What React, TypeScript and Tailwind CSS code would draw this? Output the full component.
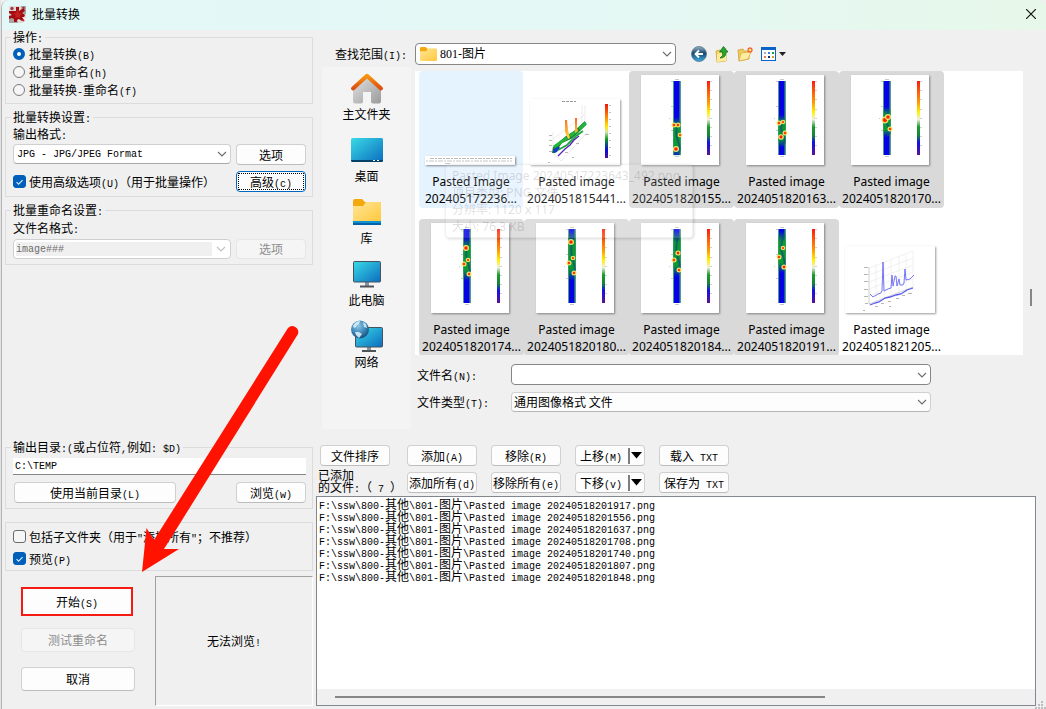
import React, { useId, useState } from "react";

const ZH = "font-['Liberation_Mono','Noto_Sans_CJK_SC',monospace]";

/** Bitmap-style interface text: half-width Latin runs beside full-width Chinese. */
function T({ children, tight = false }: { children: string; tight?: boolean }) {
  const runs = children.split(/([\x20-\x7e]+)/).filter(Boolean);
  return (
    <span className={`block whitespace-pre text-xs font-['Noto_Sans_CJK_SC',sans-serif] ${tight ? "leading-3" : "leading-[14px]"}`}>
      {runs.map((run, i) =>
        /^[\x20-\x7e]/.test(run) ? (
          <span key={i} className="font-['Liberation_Mono',monospace] text-[10px] leading-[0px]">
            {run}
          </span>
        ) : (
          run
        ),
      )}
    </span>
  );
}

function Chevron({ muted = false }: { muted?: boolean }) {
  return (
    <svg
      className={`pointer-events-none absolute right-1 top-1/2 -translate-y-1/2 ${muted ? "text-[#c0c0c0]" : "text-[#6c6c6c]"}`}
      width="10"
      height="6"
      viewBox="0 0 10 6"
      fill="none"
      stroke="currentColor"
      strokeWidth="1.1"
      aria-hidden="true"
    >
      <path d="M1 1l4 4 4-4" />
    </svg>
  );
}

function Btn({ label, className = "", disabled = false }: { label: string; className?: string; disabled?: boolean }) {
  return (
    <button
      type="button"
      disabled={disabled}
      className={`flex items-center justify-center rounded border ${
        disabled ? "border-[#e6e6e6] bg-[#f5f5f5] text-[#8d8d8d]" : "border-[#d0d0d0] border-b-[#bcbcbc] bg-[#fdfdfd] text-black"
      } ${className}`}
    >
      <T>{label}</T>
    </button>
  );
}

function Group({ title, className = "", children }: { title: string; className?: string; children: React.ReactNode }) {
  return (
    <fieldset className={`min-w-0 border border-[#dcdcdc] pl-[7px] pr-1.5 ${className}`}>
      <legend className="-ml-0.5 flex h-3.5 items-center px-0.5">
        <T>{title}</T>
      </legend>
      {children}
    </fieldset>
  );
}

function Radio({ label, checked, onChange }: { label: string; checked: boolean; onChange: () => void }) {
  return (
    <label className="flex h-[18px] items-center gap-1">
      <input
        type="radio"
        name="operation"
        checked={checked}
        onChange={onChange}
        className="h-3 w-3 appearance-none rounded-full border border-[#7a7a7a] bg-[#f6f6f6] checked:border-4 checked:border-[#005fb8] checked:bg-white"
      />
      <T>{label}</T>
    </label>
  );
}

function Check({ label, initial = false }: { label: string; initial?: boolean }) {
  const [on, setOn] = useState(initial);
  return (
    <label className="relative flex items-center gap-[3px]">
      <input
        type="checkbox"
        checked={on}
        onChange={() => setOn(!on)}
        className="h-[13px] w-[13px] shrink-0 appearance-none rounded-[3px] border border-[#6a6a6a] bg-[#f6f6f6] checked:border-[#005fb8] checked:bg-[#005fb8]"
      />
      {on && (
        <svg className="pointer-events-none absolute left-0 top-1/2 -translate-y-1/2" width="13" height="13" viewBox="0 0 13 13" fill="none" stroke="#d9ecff" strokeWidth="1.1" aria-hidden="true">
          <path d="M3.5 6.7l2.1 2 4-4" />
        </svg>
      )}
      <T>{label}</T>
    </label>
  );
}

function SplatIcon() {
  return (
    <svg width="17" height="17" viewBox="0 0 17 17" aria-hidden="true">
      <rect width="17" height="17" fill="#dddbd9" />
      <path d="M0 12l6-6 3 11H0zM12 0h5v8l-4 1z" fill="#a9a5a2" />
      <path d="M13 12h4v5h-3z" fill="#f3f2f1" />
      <path
        d="M7 1h3v4l3-2 2 0 1 2-3 2 3 2-1 2-2 0 2 3-2 1-3-2-2 1 0 2H5v-3l-2-1-3 1V10l3-1-3-2V5l4 0L7 5z"
        fill="#a30d12"
      />
      <path d="M8 4h1.500v3l3 0-1 2-1 3-2-1-2 1v-3L4 7.500 7 7z" fill="#c41f20" />
      <circle cx="3" cy="2.500" r="1.700" fill="#a93a38" />
      <circle cx="14.500" cy="2" r="1.200" fill="#a62322" />
      <circle cx="14.500" cy="14.500" r="1" fill="#b8302f" />
    </svg>
  );
}

function FolderIcon({ width, library = false }: { width: number; library?: boolean }) {
  const id = useId();
  return (
    <svg width={width} height={library ? 26 : 14} viewBox={library ? "0 0 28 26" : "0 0 28 23"} aria-hidden="true">
      <defs>
        <linearGradient id={id} x1="0" y1="0" x2="1" y2="1">
          <stop offset="0" stopColor="#ffe59a" />
          <stop offset="1" stopColor="#ffc83a" />
        </linearGradient>
      </defs>
      <path d="M0 2q0-2 2-2h7l3 3h14q2 0 2 2v8H0z" fill="#f3a90b" />
      <path d="M0 7h10l3-4h13q2 0 2 2v16q0 2-2 2H2q-2 0-2-2z" fill={`url(#${id})`} />
      {library && <path d="M0 22h28v3H0z" fill="#1193d6" />}
      {library && <path d="M0 24h28v2H0z" fill="#0564a8" />}
    </svg>
  );
}

function ScreenGradient({ id }: { id: string }) {
  return (
    <linearGradient id={id} x1="0" y1="0" x2="1" y2="1">
      <stop offset="0" stopColor="#39dbe6" />
      <stop offset="1" stopColor="#0c6cbf" />
    </linearGradient>
  );
}

function HomeIcon() {
  return (
    <svg width="34" height="31" viewBox="0 0 34 31" aria-hidden="true">
      <defs>
        <linearGradient id="home-wall" x1="0" y1="0" x2="1" y2="1">
          <stop offset="0" stopColor="#e4e4e4" />
          <stop offset="1" stopColor="#9a9a9a" />
        </linearGradient>
        <linearGradient id="home-roof" x1="0" y1="0" x2="0" y2="1">
          <stop offset="0" stopColor="#f8960c" />
          <stop offset="1" stopColor="#dc4e10" />
        </linearGradient>
      </defs>
      <path d="M3 15L17 3l14 12v13q0 2.500-2 2.500h-6q-2 0-2-2V19h-8v9.500q0 2-2 2H5q-2 0-2-2.500z" fill="url(#home-wall)" />
      <path d="M3 15.500L17 2.800l14 12.700" fill="none" stroke="url(#home-roof)" strokeWidth="4" strokeLinecap="round" strokeLinejoin="round" />
    </svg>
  );
}

function DesktopIcon() {
  return (
    <svg width="32" height="24" viewBox="0 0 32 24" aria-hidden="true">
      <defs>
        <ScreenGradient id="desk" />
      </defs>
      <rect width="32" height="24" rx="1.500" fill="url(#desk)" />
      <path d="M0 22h32q0 2-1.500 2h-29Q0 24 0 22z" fill="#063f68" />
      <path d="M22 22.500h2M26 22.500h2" stroke="#dff" strokeWidth="1" />
    </svg>
  );
}

function ComputerIcon() {
  return (
    <svg width="28" height="27" viewBox="0 0 28 27" aria-hidden="true">
      <defs>
        <ScreenGradient id="pc" />
      </defs>
      <path d="M12 21h4v4h-4z" fill="#8e9396" />
      <path d="M7 24.500h14V26.500H7z" fill="#4e5458" />
      <rect x="0.500" y="0.500" width="27" height="20.500" rx="1" fill="url(#pc)" stroke="#44535c" />
    </svg>
  );
}

function NetworkIcon() {
  return (
    <svg width="32" height="33" viewBox="0 0 32 33" aria-hidden="true">
      <defs>
        <ScreenGradient id="net" />
        <radialGradient id="globe" cx="0.400" cy="0.300" r="0.700">
          <stop offset="0" stopColor="#8fc8e8" />
          <stop offset="0.600" stopColor="#3c86b6" />
          <stop offset="1" stopColor="#175480" />
        </radialGradient>
      </defs>
      <path d="M16 27h4v4h-4z" fill="#8e9396" />
      <path d="M11 30h14v2H11z" fill="#4e5458" />
      <rect x="4.500" y="7.500" width="27" height="19.500" rx="1" fill="url(#net)" stroke="#44535c" />
      <circle cx="9" cy="9.500" r="9" fill="url(#globe)" />
      <path d="M2 6q3-5 7-5l-1 3-2 1-1 2-2 1zM12 2l3 2 1 4-3-1zM4 12l4 0 3 2-3 4-3-3z" fill="#e4f2f8" opacity="0.850" />
    </svg>
  );
}

/** Core map: a blue rod with hot spots given as [x, y, radius]. */
function HeatThumb({ green, spots }: { green: [number, number]; spots: [number, number, number][] }) {
  const id = useId();
  return (
    <svg width="78" height="90" viewBox="0 0 78 90" className="bg-white shadow-[1px_1px_2px_rgba(0,0,0,0.4)]" aria-hidden="true">
      <defs>
        <linearGradient id={`${id}s`} x1="0" y1="0" x2="0" y2="1">
          <stop offset="0" stopColor="#ff1a10" />
          <stop offset="0.300" stopColor="#ffa000" />
          <stop offset="0.420" stopColor="#fff200" />
          <stop offset="0.520" stopColor="#eeeee0" />
          <stop offset="0.620" stopColor="#1a9c28" />
          <stop offset="0.740" stopColor="#178040" />
          <stop offset="0.830" stopColor="#1010e8" />
          <stop offset="1" stopColor="#5a1490" />
        </linearGradient>
        <linearGradient id={`${id}g`} x1="0" y1="0" x2="0" y2="1">
          <stop offset="0" stopColor="#0a9a30" stopOpacity="0" />
          <stop offset="0.250" stopColor="#0a9a30" />
          <stop offset="0.750" stopColor="#0a9a30" />
          <stop offset="1" stopColor="#0a9a30" stopOpacity="0" />
        </linearGradient>
        <clipPath id={`${id}c`}>
          <rect x="32" y="6" width="8" height="74" />
        </clipPath>
      </defs>
      <rect x="32" y="6" width="8" height="74" fill="#4f9f80" />
      <rect x="33" y="6" width="5.500" height="74" fill="#0503e6" />
      <rect x="32.500" y={green[0]} width="7" height={green[1] - green[0]} fill={`url(#${id}g)`} />
      <path
        d={`M38 ${green[0] + 4}q-5 ${(green[1] - green[0]) / 4} -1 ${(green[1] - green[0]) / 2}t-1 ${(green[1] - green[0]) / 3}`}
        fill="none"
        stroke="#19428f"
        strokeWidth="1.800"
        opacity="0.650"
        clipPath={`url(#${id}c)`}
      />
      {spots.map(([x, y, r], i) => (
        <g key={i}>
          <circle cx={x} cy={y} r={r + 1} fill="#e3ee7c" />
          <circle cx={x} cy={y} r={r + 0.2} fill="#ffb030" />
          <circle cx={x} cy={y} r={r - 0.4} fill="#f8200c" />
        </g>
      ))}
      <path d="M30 6.500h2M30 31.500h2M30 55.500h2M28 43.500h1M34 81.500h4M34 4.500h4" stroke="#c9c9c9" />
      <rect x="66" y="6" width="3" height="74" fill={`url(#${id}s)`} />
      <path d="M69 6.500h2M69 15.500h2M69 24.500h2M69 34.500h2M69 43.500h2M69 52.500h2M69 61.500h2M69 70.500h2" stroke="#cfcfcf" />
    </svg>
  );
}

function TextStripThumb() {
  return (
    <svg width="90" height="9" viewBox="0 0 90 9" className="bg-white shadow-[1px_1px_2px_rgba(0,0,0,0.45)]" aria-hidden="true">
      <path d="M5 2.500h82" stroke="#a9a9a9" strokeDasharray="4 1 2 1" strokeWidth="0.800" />
      <path d="M1 5h86" stroke="#b5b5b5" strokeDasharray="2 1 5 1" strokeWidth="0.800" />
      <path d="M20 7.500h5" stroke="#cccccc" />
    </svg>
  );
}

function SurfaceThumb() {
  return (
    <svg width="90" height="66" viewBox="0 0 90 66" className="bg-white shadow-[1px_1px_2px_rgba(0,0,0,0.4)]" aria-hidden="true">
      <defs>
        <linearGradient id="surface-scale" x1="0" y1="0" x2="0" y2="1">
          <stop offset="0" stopColor="#f01408" />
          <stop offset="0.250" stopColor="#ff8a00" />
          <stop offset="0.420" stopColor="#ffe800" />
          <stop offset="0.520" stopColor="#d6e4b0" />
          <stop offset="0.650" stopColor="#109a20" />
          <stop offset="0.850" stopColor="#0808e0" />
          <stop offset="1" stopColor="#4d1290" />
        </linearGradient>
        <linearGradient id="surface-peak" x1="0" y1="0" x2="0" y2="1">
          <stop offset="0" stopColor="#f86a20" />
          <stop offset="1" stopColor="#ffe040" />
        </linearGradient>
      </defs>
      <path d="M32 2.500h14" stroke="#999" strokeDasharray="3 1" />
      <path d="M23 33v21l8 8 26-28M52 6v22M55 6v20M23 40l31-24" fill="none" stroke="#e4e4e4" strokeWidth="0.700" />
      <path d="M19 36.500h3M19 41.500h3M19 46.500h3M19 52.500h3M18 63.500h2M35 53.500h3M42 58.500h2M46 44.500h3M55 35.500h4" stroke="#b8b8b8" />
      <path d="M23 48l13-11 8-5 11-10 1 4-9 9-6 5-9 4-7 10-3 0z" fill="#127a34" />
      <path d="M24 48l13-9M40 37l8-6M49 30l7-6" fill="none" stroke="#23b53b" strokeWidth="3.200" />
      <path d="M28 51l9-5 9-9 7-5" fill="none" stroke="#1da838" strokeWidth="1.800" />
      <path d="M23 51l4-3 3 0-3 5-3 1z" fill="#173bc3" />
      <path d="M35 21h2l1 10 2 8-2 1-3-7zM45 19h2l0 9 1 4-3 2z" fill="url(#surface-peak)" />
      <path d="M28 57l7-7 5-4 4-5 5-4" fill="none" stroke="#5420c0" strokeWidth="1.300" />
      <rect x="75" y="5" width="3" height="54" fill="url(#surface-scale)" />
      <path d="M79 6.500h2M79 13.500h2M79 20.500h2M79 27.500h2M79 34.500h2M79 41.500h2M79 48.500h2M79 56.500h2" stroke="#c0c0c0" />
    </svg>
  );
}

function LineThumb() {
  return (
    <svg width="90" height="67" viewBox="0 0 90 67" className="bg-white shadow-[1px_1px_2px_rgba(0,0,0,0.4)]" aria-hidden="true">
      <path d="M24 22l44-17v37M24 29l44-17M24 36l44-17M24 43l44-17M24 50l44-17M31 19v36M39 16v37M46 13v39M54 10v40M61 8v38" fill="none" stroke="#ededed" strokeWidth="0.800" />
      <path d="M24 21v37l44-17" fill="none" stroke="#c4c4c4" strokeWidth="0.800" />
      <path d="M19 21.500h4M19 28.500h4M19 35.500h4M19 43.500h4M19 50.500h4M20 57.500h3M18 64.500h2M30 60.500h3M36 57.500h3M44 60.500h2M43 55.500h3M51 52.500h3M57 49.500h3M63 47.500h4" stroke="#b5b5b5" />
      <path d="M25 48l3 3 5-3 3-1 1-2 1-29 1 29 4-2 3-1 1-13 1 11 2-10 1 0 1 10 2-7 1 6 3 0 1-2 1-14 1 11 4-1 4-4" fill="none" stroke="#6868f6" strokeWidth="0.900" />
      <path d="M25 59l5-2 4-1 6-4 5-1 6-2 5-1 6-4 6-2" fill="none" stroke="#5a5af0" strokeWidth="1.300" />
    </svg>
  );
}

const FILES = [
  { name: "Pasted Image", code: "202405172236...", state: "hover", thumb: <TextStripThumb /> },
  { name: "Pasted image", code: "2024051815441...", state: "plain", thumb: <SurfaceThumb /> },
  { name: "Pasted image", code: "2024051820155...", state: "selected", thumb: <HeatThumb green={[42, 82]} spots={[[33, 50, 1.5], [37, 50, 1.5], [39, 60, 1.3], [35, 74, 2]]} /> },
  { name: "Pasted image", code: "2024051820163...", state: "selected", thumb: <HeatThumb green={[40, 72]} spots={[[33, 48, 1.5], [37, 47, 1.3], [39, 58, 1.5], [35, 62, 1.8]]} /> },
  { name: "Pasted image", code: "2024051820170...", state: "selected", thumb: <HeatThumb green={[32, 62]} spots={[[34, 45, 2.4], [37, 42, 2], [39, 54, 1.5]]} /> },
  { name: "Pasted image", code: "2024051820174...", state: "selected", thumb: <HeatThumb green={[14, 58]} spots={[[35, 25, 2], [37, 37, 1.3], [33, 41, 1.5], [38, 51, 1.5]]} /> },
  { name: "Pasted image", code: "2024051820180...", state: "selected", thumb: <HeatThumb green={[8, 58]} spots={[[35, 19, 2], [37, 35, 1.3], [33, 40, 1.5], [38, 50, 1.5]]} /> },
  { name: "Pasted image", code: "2024051820184...", state: "selected", thumb: <HeatThumb green={[8, 54]} spots={[[37, 30, 1.6], [33, 37, 1.5], [38, 47, 1.5]]} /> },
  { name: "Pasted image", code: "2024051820191...", state: "selected", thumb: <HeatThumb green={[8, 50]} spots={[[37, 25, 1.3], [33, 34, 1.5], [38, 44, 1.6]]} /> },
  { name: "Pasted image", code: "2024051821205...", state: "plain", thumb: <LineThumb /> },
];

const PLACES = [
  { label: "主文件夹", icon: <HomeIcon /> },
  { label: "桌面", icon: <DesktopIcon /> },
  { label: "库", icon: <FolderIcon width={28} library /> },
  { label: "此电脑", icon: <ComputerIcon /> },
  { label: "网络", icon: <NetworkIcon /> },
];

const ADDED = ["917", "556", "637", "708", "740", "807", "848"];

function Toolbar() {
  return (
    <div className="flex items-center gap-[7px]">
      <button type="button" aria-label="后退">
        <svg width="16" height="16" viewBox="0 0 16 16">
          <defs>
            <linearGradient id="back-ball" x1="0" y1="0" x2="0" y2="1">
              <stop offset="0" stopColor="#9db4c5" />
              <stop offset="0.450" stopColor="#16476f" />
              <stop offset="1" stopColor="#3fb1e4" />
            </linearGradient>
          </defs>
          <circle cx="8" cy="8" r="7.500" fill="url(#back-ball)" stroke="#53758e" strokeWidth="0.800" />
          <path d="M12 8H5M8 4.500L4.500 8 8 11.500" fill="none" stroke="#fff" strokeWidth="1.900" />
        </svg>
      </button>
      <button type="button" aria-label="向上一级">
        <svg width="16" height="17" viewBox="0 0 16 17">
          <path d="M2 5l4-1 1 1h5v10l-9 1z" fill="#f3d568" stroke="#cda233" strokeWidth="0.800" />
          <path d="M3 8l9-2v9l-9 1z" fill="#ffeb9b" />
          <path d="M6 12q4-2 2.500-6H5.500l4-5.500L14 6h-2q0 6-6 6z" fill="#27a52f" stroke="#107219" strokeWidth="0.800" />
        </svg>
      </button>
      <button type="button" aria-label="新建文件夹">
        <svg width="17" height="16" viewBox="0 0 17 16">
          <path d="M1 4l5-1 1 2h5v8l-10 2z" fill="#f0cb5a" stroke="#cda233" strokeWidth="0.800" />
          <path d="M4 7l10-1-3 7-9 2z" fill="#ffeca0" stroke="#d5ac44" strokeWidth="0.700" />
          <path d="M13 1v6M10 4h6M11 2l4 4M15 2l-4 4" stroke="#f2542a" strokeWidth="1.100" />
          <circle cx="13" cy="4" r="1.300" fill="#ffe36c" />
        </svg>
      </button>
      <button type="button" aria-label="查看菜单" className="flex items-center gap-[3px]">
        <svg width="15" height="14" viewBox="0 0 15 14">
          <rect x="0.500" y="0.500" width="14" height="13" fill="#fff" stroke="#0a64c8" />
          <path d="M0 0h15v3H0z" fill="#0a64c8" />
          <path d="M3 5h2v2H3z" fill="#a8a8c8" />
          <path d="M7 5h2v2H7z" fill="#3c7ed8" />
          <path d="M11 5h2v2h-2z" fill="#1ea03a" />
          <path d="M3 9h2v2H3z" fill="#f07a5a" />
          <path d="M7 9h2v2H7z" fill="#12307a" />
          <path d="M11 9h2v2h-2z" fill="#d8a018" />
        </svg>
        <svg width="7" height="4" viewBox="0 0 7 4">
          <path d="M0 0h7L3.500 4z" fill="#222" />
        </svg>
      </button>
    </div>
  );
}

function MoveButton({ label }: { label: string }) {
  return (
    <button type="button" className="flex h-[21px] w-[70px] items-center justify-between rounded border border-[#d0d0d0] border-b-[#bcbcbc] bg-[#fdfdfd] pl-1 pr-0.5">
      <T>{label}</T>
      <span className="flex items-center gap-px">
        <span className="h-4 w-0.5 bg-[#7d7d7d]" />
        <svg width="11" height="7" viewBox="0 0 11 7" aria-hidden="true">
          <path d="M0 0h11L5.500 6.500z" fill="#000" />
        </svg>
      </span>
    </button>
  );
}

function Options() {
  const [op, setOp] = useState(0);
  return (
    <aside className="flex w-[308px] shrink-0 flex-col">
      <Group title="操作:" className="h-[74px]">
        <div className="pt-px">
          {["批量转换(B)", "批量重命名(h)", "批量转换-重命名(f)"].map((label, i) => (
            <Radio key={label} label={label} checked={op === i} onChange={() => setOp(i)} />
          ))}
        </div>
      </Group>

      <Group title="批量转换设置:" className="mt-1.5 h-[87px]">
        <label htmlFor="format" className="flex h-5 items-center">
          <T>输出格式:</T>
        </label>
        <div className="flex gap-[5px]">
          <div className="relative h-5 w-[218px]">
            <select id="format" className={`block h-5 w-full appearance-none rounded-sm border border-[#d0d0d0] border-b-[#a8a8a8] bg-white pl-[3px] text-[10px] ${ZH}`}>
              <option>JPG - JPG/JPEG Format</option>
            </select>
            <Chevron />
          </div>
          <Btn label="选项" className="h-[21px] flex-1" />
        </div>
        <div className="mt-1.5 flex items-center justify-between">
          <Check label="使用高级选项(U)（用于批量操作）" initial />
          <button type="button" className="h-[21px] w-[70px] rounded border border-[#0067c0] bg-[#fdfdfd] p-px">
            <span className="flex h-full items-center justify-center border border-dotted border-black">
              <T>高级(c)</T>
            </span>
          </button>
        </div>
      </Group>

      <Group title="批量重命名设置:" className="mt-1.5 h-[62px]">
        <label htmlFor="rename" className="flex h-[22px] items-center">
          <T>文件名格式:</T>
        </label>
        <div className="flex gap-[5px]">
          <div className="relative w-[218px] rounded-sm border border-[#d0d0d0] bg-white p-0.5">
            <input id="rename" disabled defaultValue="image###" className={`block h-3.5 w-[196px] bg-[#f0f0f0] text-[10px] text-[#6d6d6d] ${ZH}`} />
            <Chevron muted />
          </div>
          <Btn label="选项" disabled className="h-5 flex-1" />
        </div>
      </Group>

      <Group title="输出目录:(或占位符,例如: $D)" className="mt-auto h-[69px]">
        <input
          aria-label="输出目录"
          defaultValue="C:\TEMP"
          className={`mt-1 block h-[17px] w-full border-b border-[#868686] bg-white pl-0.5 text-[10px] ${ZH}`}
        />
        <div className="mt-[7px] flex justify-between pl-px">
          <Btn label="使用当前目录(L)" className="h-[21px] w-[162px]" />
          <Btn label="浏览(w)" className="h-[21px] w-[70px]" />
        </div>
      </Group>

      <div className="mt-[13px] flex h-[49px] flex-col justify-center gap-2 border border-[#dcdcdc] px-[7px] pt-0.5">
        <Check label={'包括子文件夹（用于"添加所有"；不推荐）'} />
        <Check label="预览(P)" initial />
      </div>

      <div className="mt-[5px] flex h-[130px] gap-5 pl-4">
        <div className="flex w-[114px] flex-col gap-3 pt-[11px]">
          <button type="button" className="flex h-[29px] w-[112px] items-center justify-center border-2 border-[#f51a12] bg-[#fdfdfd]">
            <T>开始(S)</T>
          </button>
          <Btn label="测试重命名" disabled className="h-6" />
          <Btn label="取消" className="mt-[3px] h-6" />
        </div>
        <div className="flex flex-1 items-center justify-center border border-[#a0a0a0] border-r-white border-b-white">
          <T>无法浏览!</T>
        </div>
      </div>
      <div className="h-[3px]" />
    </aside>
  );
}

function GhostTooltip() {
  return (
    <div className="pointer-events-none absolute left-[30px] top-[93px] w-[248px] rounded border border-black/5 bg-white/15 py-0.5 pl-1.5 text-xs leading-[17px] text-black/15 shadow-[1px_1px_3px_rgba(0,0,0,0.15)] font-['Noto_Sans','Noto_Sans_CJK_SC',sans-serif]">
      <p className="whitespace-nowrap">Pasted Image 20240517223643_492.png</p>
      <p>项目类型: PNG 文件</p>
      <p>分辨率: 1120 x 117</p>
      <p>大小: 76.3 KB</p>
    </div>
  );
}

function Browser() {
  return (
    <section className="flex flex-col">
      <div className="flex items-center pl-[13px] pt-[13px]">
        <label htmlFor="lookin" className="w-20">
          <T>查找范围(I):</T>
        </label>
        <div className="relative mr-[15px] w-[261px]">
          <span className="pointer-events-none absolute inset-y-0 left-[5px] flex items-center">
            <FolderIcon width={17} />
          </span>
          <select
            id="lookin"
            className="block h-[22px] w-full appearance-none rounded-sm border border-[#868686] bg-white pl-6 text-xs font-['Liberation_Serif','Noto_Sans_CJK_SC',serif]"
          >
            <option>801-图片</option>
          </select>
          <Chevron />
        </div>
        <Toolbar />
      </div>

      <div className="mt-0.5 flex pr-[23px]">
        <nav className="flex h-[362px] w-[89px] shrink-0 flex-col bg-[#f4f4f4]" aria-label="位置">
          {PLACES.map((p) => (
            <a key={p.label} href="#" className="flex h-[62px] flex-col items-center justify-end pb-[7px] text-black">
              <span className="flex h-9 items-center">{p.icon}</span>
              <span className="text-xs leading-4 font-['Noto_Sans_CJK_SC',sans-serif]">{p.label}</span>
            </a>
          ))}
        </nav>

        <div className="ml-1 mt-1 min-w-0 flex-1">
          <div className="relative flex">
            <div className="relative h-[284px] flex-1 overflow-hidden bg-white pl-1">
              <div className="grid grid-cols-[repeat(auto-fill,105px)] gap-y-[11px]">
                {FILES.map((f) => (
                  <figure
                    key={f.code}
                    className={`flex h-[137px] flex-col items-center rounded-sm ${
                      f.state === "selected" ? "bg-[#d9d9d9]" : f.state === "hover" ? "mr-px bg-[#e5f3ff]" : ""
                    }`}
                  >
                    <div className="flex h-[94px] items-end pr-[3px]">{f.thumb}</div>
                    <figcaption className="mt-2 text-center text-xs leading-[17px] font-['Noto_Sans',sans-serif]">
                      {f.name}
                      <br />
                      {f.code}
                    </figcaption>
                  </figure>
                ))}
              </div>
              <GhostTooltip />
            </div>
            <span className="absolute -right-[9px] top-[218px] h-[17px] w-0.5 bg-[#868686]" />
          </div>

          <div className="mt-[9px] flex items-center pl-0.5">
            <label htmlFor="filename" className="w-[94px]">
              <T>文件名(N):</T>
            </label>
            <div className="relative w-[420px]">
              <input id="filename" className={`block h-[21px] w-full rounded-sm border border-[#868686] bg-white px-1 text-[10px] ${ZH}`} />
              <Chevron />
            </div>
          </div>
          <div className="mt-[7px] flex items-center pl-0.5">
            <label htmlFor="filetype" className="w-[94px]">
              <T>文件类型(T):</T>
            </label>
            <div className="relative w-[420px]">
              <select
                id="filetype"
                className="block h-5 w-full appearance-none rounded-sm border border-[#d0d0d0] border-b-[#b5b5b5] bg-[#fdfdfd] pl-0.5 text-xs font-['Noto_Sans_CJK_SC',sans-serif]"
              >
                <option>通用图像格式 文件</option>
              </select>
              <Chevron />
            </div>
          </div>
        </div>
      </div>
    </section>
  );
}

function Queue() {
  return (
    <section className="mt-4 flex flex-1 flex-col">
      <div className="flex gap-3.5 pl-1">
        <div className="flex w-[73px] flex-col">
          <Btn label="文件排序" className="h-[21px] w-[70px]" />
          <div className="-ml-0.5 mt-[3px] flex flex-col">
            <T tight>已添加</T>
            <T tight>的文件:（ 7 ）</T>
          </div>
        </div>
        <div className="flex w-[70px] flex-col gap-1.5">
          <Btn label="添加(A)" className="h-[21px]" />
          <Btn label="添加所有(d)" className="h-[21px]" />
        </div>
        <div className="flex w-[70px] flex-col gap-1.5">
          <Btn label="移除(R)" className="h-[21px]" />
          <Btn label="移除所有(e)" className="h-[21px]" />
        </div>
        <div className="flex w-[70px] flex-col gap-1.5">
          <MoveButton label="上移(M)" />
          <MoveButton label="下移(v)" />
        </div>
        <div className="flex w-[70px] flex-col gap-1.5">
          <Btn label="载入 TXT" className="h-[21px]" />
          <Btn label="保存为 TXT" className="h-[21px]" />
        </div>
      </div>

      <div className="mr-2.5 mt-[3px] flex flex-1 flex-col border border-[#828790] bg-white">
        <ul className="flex-1 px-0.5 pt-px">
          {ADDED.map((n) => (
            <li key={n}>
              <T tight>{`F:\\ssw\\800-其他\\801-图片\\Pasted image 20240518201${n}.png`}</T>
            </li>
          ))}
        </ul>
        <div className="flex h-4 items-center bg-[#f0f0f0] pl-[18px]">
          <span className="h-0.5 w-[70%] bg-[#868686]" />
        </div>
      </div>
      <div className="h-[3px]" />
    </section>
  );
}

export default function App() {
  return (
    <div className="relative flex min-h-screen flex-col border-l border-[#e3e3e3] bg-[#f0f0f0] text-black">
      <div className="flex flex-1 flex-col rounded-tl-lg border-l border-[#b4b4b4]">
        <header className="flex h-[30px] items-center rounded-t-lg bg-gradient-to-r from-[#e3f9f7] via-[#e4f8f6] to-[#e7f8ea] pb-0.5 pl-[7px] pr-2.5">
          <SplatIcon />
          <h1 className="ml-1.5 flex-1 text-xs leading-4 font-['Noto_Sans_CJK_SC',sans-serif]">批量转换</h1>
          <button type="button" aria-label="关闭">
            <svg width="10" height="10" viewBox="0 0 10 10" stroke="#111" strokeWidth="1.200">
              <path d="M0 0l10 10M10 0L0 10" />
            </svg>
          </button>
        </header>
        <main className="flex flex-1 pl-[3px]">
          <Options />
          <div className="ml-[3px] flex min-w-0 flex-1 flex-col">
            <div className="pl-1.5">
              <Browser />
            </div>
            <Queue />
          </div>
        </main>
      </div>

      <svg className="pointer-events-none absolute left-[139px] top-[323px]" width="162" height="250" viewBox="140 323 162 250" aria-hidden="true">
        <path d="M288 328A6 6 0 0 1 298 334L164 549H179L142 572L146.500 528L154 540Z" fill="#ff1200" />
      </svg>
      <svg className="pointer-events-none absolute bottom-0 right-0" width="11" height="9" viewBox="0 0 11 9" fill="#bdbdbd" aria-hidden="true">
        <path d="M6 1h2v2H6zM3 4h2v2H3zM6 4h2v2H6zM0 7h2v2H0zM3 7h2v2H3zM6 7h2v2H6zM9 7h2v2H9z" />
      </svg>
    </div>
  );
}
